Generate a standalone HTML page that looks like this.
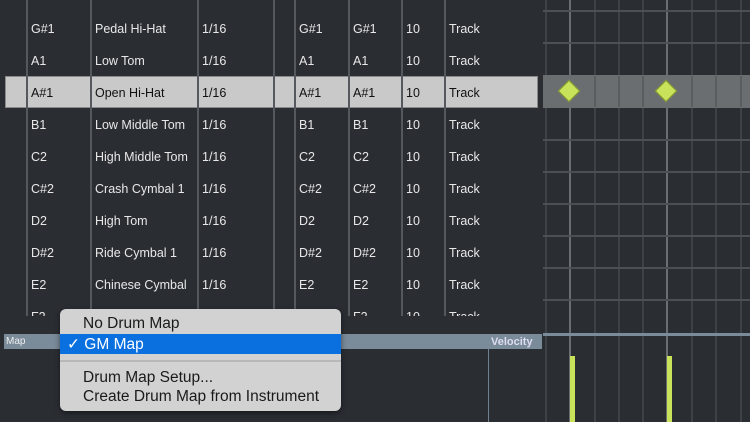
<!DOCTYPE html><html><head><style>
body{margin:0;width:750px;height:422px;overflow:hidden;background:#2a2e33;position:relative;font-family:"Liberation Sans",Arial,sans-serif}
.a{position:absolute}
.t{position:absolute;color:#e8e8e8;font-size:12.5px;line-height:14px}
.v{position:absolute;width:2px;background:#55595e}
.h{position:absolute;height:2px;background:#4c5055;left:543px;width:207px}
.g{position:absolute;width:2px;background:#3e4247}
.gb{position:absolute;width:2px;background:#6a6e72}
.mi{position:absolute;left:23px;font-size:15.5px;color:#1a1a1a;white-space:nowrap}
</style></head><body>
<div class="a" style="left:0;top:316px;width:543px;height:18px;background:#2a2e33"></div>
<div class="a" style="left:5px;top:76px;width:533px;height:32px;background:#c9c9c9;border:1px solid #8a8a8a;box-sizing:border-box"></div>
<div class="v" style="left:26px;top:0;height:316px"></div>
<div class="v" style="left:90px;top:0;height:316px"></div>
<div class="v" style="left:197px;top:0;height:316px"></div>
<div class="v" style="left:273px;top:0;height:316px"></div>
<div class="v" style="left:294px;top:0;height:316px"></div>
<div class="v" style="left:348px;top:0;height:316px"></div>
<div class="v" style="left:401px;top:0;height:316px"></div>
<div class="v" style="left:444px;top:0;height:316px"></div>
<div id="rows"></div>
<div class="g" style="left:545px;top:0;height:334px"></div>
<div class="gb" style="left:569px;top:0;height:422px"></div>
<div class="g" style="left:594px;top:0;height:422px"></div>
<div class="g" style="left:618px;top:0;height:422px"></div>
<div class="g" style="left:642px;top:0;height:422px"></div>
<div class="gb" style="left:666px;top:0;height:422px"></div>
<div class="g" style="left:691px;top:0;height:422px"></div>
<div class="g" style="left:715px;top:0;height:422px"></div>
<div class="g" style="left:740px;top:0;height:422px"></div>
<div class="g" style="left:545px;top:336px;height:86px"></div>
<div class="h" style="top:10px"></div><div class="h" style="top:42px"></div>
<div class="h" style="top:139px"></div><div class="h" style="top:171px"></div><div class="h" style="top:203px"></div><div class="h" style="top:235px"></div><div class="h" style="top:267px"></div><div class="h" style="top:299px"></div>
<div class="a" style="left:543px;top:75px;width:207px;height:33px;background:#6b6e71"></div>
<div class="g" style="left:594px;top:76px;height:31px;background:#5a5d60"></div><div class="g" style="left:618px;top:76px;height:31px;background:#5a5d60"></div><div class="g" style="left:642px;top:76px;height:31px;background:#5a5d60"></div><div class="g" style="left:691px;top:76px;height:31px;background:#5a5d60"></div><div class="g" style="left:715px;top:76px;height:31px;background:#5a5d60"></div><div class="g" style="left:740px;top:76px;height:31px;background:#5a5d60"></div>
<div class="a" style="left:561px;top:83px;width:14px;height:14px;background:#c8e35a;border:1px solid #7c9030;transform:rotate(45deg)"></div>
<div class="a" style="left:658px;top:83px;width:14px;height:14px;background:#c8e35a;border:1px solid #7c9030;transform:rotate(45deg)"></div>
<div class="a" style="left:4px;top:334px;width:538px;height:15px;background:#7a8b9a"></div>
<div class="a" style="left:543px;top:333px;width:207px;height:3px;background:#7a8b9a"></div>
<div class="t" style="left:6px;top:335px;font-size:10px;color:#eee">Map</div>
<div class="t" style="left:491px;top:335px;font-size:11px;font-weight:bold;color:#dde">Velocity</div>
<div class="a" style="left:488px;top:349px;width:1px;height:73px;background:#6f8090"></div>
<div class="a" style="left:570px;top:356px;width:5px;height:66px;background:#c8e35a"></div>
<div class="a" style="left:667px;top:356px;width:5px;height:66px;background:#c8e35a"></div>
<div class="a" style="left:60px;top:309px;width:281px;height:102px;background:#d2d2d2;border-radius:6px;box-shadow:0 2px 6px rgba(0,0,0,.5)">
<div class="mi" style="top:6px">No Drum Map</div>
<div class="a" style="left:0;top:25px;width:281px;height:20px;background:#0a6fdf"></div>
<div class="mi" style="top:26px;left:7px;color:#fff">✓ GM Map</div>
<div class="a" style="left:0;top:51px;width:281px;height:2px;background:#b8b8b8"></div>
<div class="mi" style="top:60px">Drum Map Setup...</div>
<div class="mi" style="top:79px">Create Drum Map from Instrument</div>
</div>
<script>
var d=[["",""],["G#1","Pedal Hi-Hat"],["A1","Low Tom"],["A#1","Open Hi-Hat"],["B1","Low Middle Tom"],["C2","High Middle Tom"],["C#2","Crash Cymbal 1"],["D2","High Tom"],["D#2","Ride Cymbal 1"],["E2","Chinese Cymbal"],["F2",""]];
var h="";for(var i=1;i<d.length;i++){var y=i*32-10,s=i==3?"color:#111;":"";
var c=[[31,d[i][0]],[95,d[i][1]],[202,"1/16"],[299,d[i][0]],[353,d[i][0]],[406,"10"],[449,"Track"]];
for(var j=0;j<c.length;j++)h+='<div class="t" style="'+s+'left:'+c[j][0]+'px;top:'+y+'px">'+c[j][1]+'</div>';}
document.getElementById("rows").innerHTML='<div class="a" style="left:0;top:0;width:540px;height:316px;overflow:hidden">'+h+'</div>';
</script>
</body></html>
